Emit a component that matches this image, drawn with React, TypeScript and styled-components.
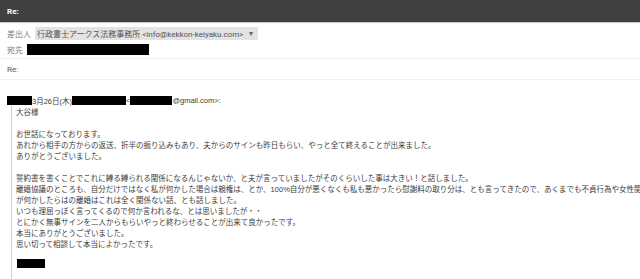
import React from "react";
import styled, { createGlobalStyle } from "styled-components";

const GlobalStyle = createGlobalStyle`
  html, body { margin: 0; padding: 0; background: #ffffff; }
  body {
    width: 640px;
    height: 279px;
    overflow: hidden;
    font-family: "Liberation Sans", "Noto Sans CJK JP", sans-serif;
  }
`;

const Page = styled.div`
  width: 640px;
  height: 279px;
  overflow: hidden;
  display: flex;
  flex-direction: column;
`;

const TitleBar = styled.div`
  height: 22px;
  background: #404040;
  border-bottom: 1px solid #c9c9c9;
  display: flex;
  align-items: center;
  padding-left: 7px;
  color: #ffffff;
  font-family: Roboto, "Noto Sans CJK JP", sans-serif;
  font-weight: 700;
  font-size: 8px;
  flex-shrink: 0;
`;

const Fields = styled.div`
  display: flex;
  flex-direction: column;
  padding: 3px 0 0 0;
  font-family: Roboto, "Noto Sans CJK JP", sans-serif;
  font-size: 8px;
  color: #444;
`;

const FieldRow = styled.div<{ $h: number; $divider?: boolean }>`
  height: ${(p) => p.$h}px;
  display: flex;
  align-items: center;
  gap: 4px;
  padding-left: 7px;
  border-bottom: ${(p) => (p.$divider ? "1px solid #efefef" : "none")};
`;

const Label = styled.span`
  color: #7a7a7a;
`;

const SenderChip = styled.span`
  display: inline-flex;
  align-items: center;
  gap: 5px;
  height: 13px;
  padding: 0 5px 0 2px;
  background: #e3e3e3;
  color: #555;
  border-radius: 1px;
`;

const Caret = styled.span`
  font-size: 8px;
  color: #666;
`;

const Redact = styled.span<{ $w: number; $h: number }>`
  display: inline-block;
  width: ${(p) => p.$w}px;
  height: ${(p) => p.$h}px;
  background: #000;
  vertical-align: middle;
  flex-shrink: 0;
`;

const Subject = styled.span`
  color: #555;
`;

const Body = styled.div`
  padding: 15px 0 0 7px;
  font-family: "Liberation Sans", "Noto Sans CJK JP", sans-serif;
  font-size: 7.5px;
  color: #3c3c3c;
  flex: 1;
  display: flex;
  flex-direction: column;
`;

const QuoteHeader = styled.div`
  display: flex;
  align-items: center;
  height: 10px;
  white-space: nowrap;
`;

const Quote = styled.div`
  margin: 1px 0 0 4px;
  border-left: 1px solid #cfcfcf;
  padding: 1px 0 20px 4px;
  flex: 1;
`;

const Line = styled.div`
  height: 11px;
  line-height: 11px;
  white-space: nowrap;
`;

const Blank = styled.div<{ $h?: number }>`
  height: ${(p) => p.$h ?? 11}px;
`;

const SignRow = styled.div`
  height: 11px;
  display: flex;
  align-items: center;
  padding-left: 1px;
`;

const lines1 = [
  "お世話になっております。",
  "あれから相手の方からの返送、折半の振り込みもあり、夫からのサインも昨日もらい、やっと全て終えることが出来ました。",
  "ありがとうございました。",
];

const lines2 = [
  "誓約書を書くことでこれに縛る縛られる関係になるんじゃないか、と夫が言っていましたがそのくらいした事は大きい！と話しました。",
  "離婚協議のところも、自分だけではなく私が何かした場合は親権は、とか、100%自分が悪くなくも私も悪かったら慰謝料の取り分は、とも言ってきたので、あくまでも不貞行為や女性関係",
  "が何かしたらはの離婚はこれは全く関係ない話、とも話しました。",
  "いつも理屈っぽく言ってくるので何か言われるな、とは思いましたが・・",
  "とにかく無事サインを二人からもらいやっと終わらせることが出来て良かったです。",
  "本当にありがとうございました。",
  "思い切って相談して本当によかったです。",
];

export default function App() {
  return (
    <>
      <GlobalStyle />
      <Page>
        <TitleBar>Re:</TitleBar>
        <Fields>
          <FieldRow $h={14}>
            <Label>差出人</Label>
            <SenderChip>
              行政書士アークス法務事務所 &lt;info@kekkon-keiyaku.com&gt;
              <Caret>▾</Caret>
            </SenderChip>
          </FieldRow>
          <FieldRow $h={18} $divider>
            <Label>宛先</Label>
            <Redact $w={122} $h={11} />
          </FieldRow>
          <FieldRow $h={20} $divider>
            <Subject>Re:</Subject>
          </FieldRow>
        </Fields>
        <Body>
          <QuoteHeader>
            <Redact $w={25} $h={9} />
            3月26日(木)
            <Redact $w={54} $h={9} />
            &lt;
            <Redact $w={42} $h={9} />
            @gmail.com&gt;:
          </QuoteHeader>
          <Quote>
            <Line>大谷様</Line>
            <Blank />
            {lines1.map((t) => (
              <Line key={t}>{t}</Line>
            ))}
            <Blank />
            {lines2.map((t) => (
              <Line key={t}>{t}</Line>
            ))}
            <Blank $h={8} />
            <SignRow>
              <Redact $w={28} $h={9} />
            </SignRow>
          </Quote>
        </Body>
      </Page>
    </>
  );
}
